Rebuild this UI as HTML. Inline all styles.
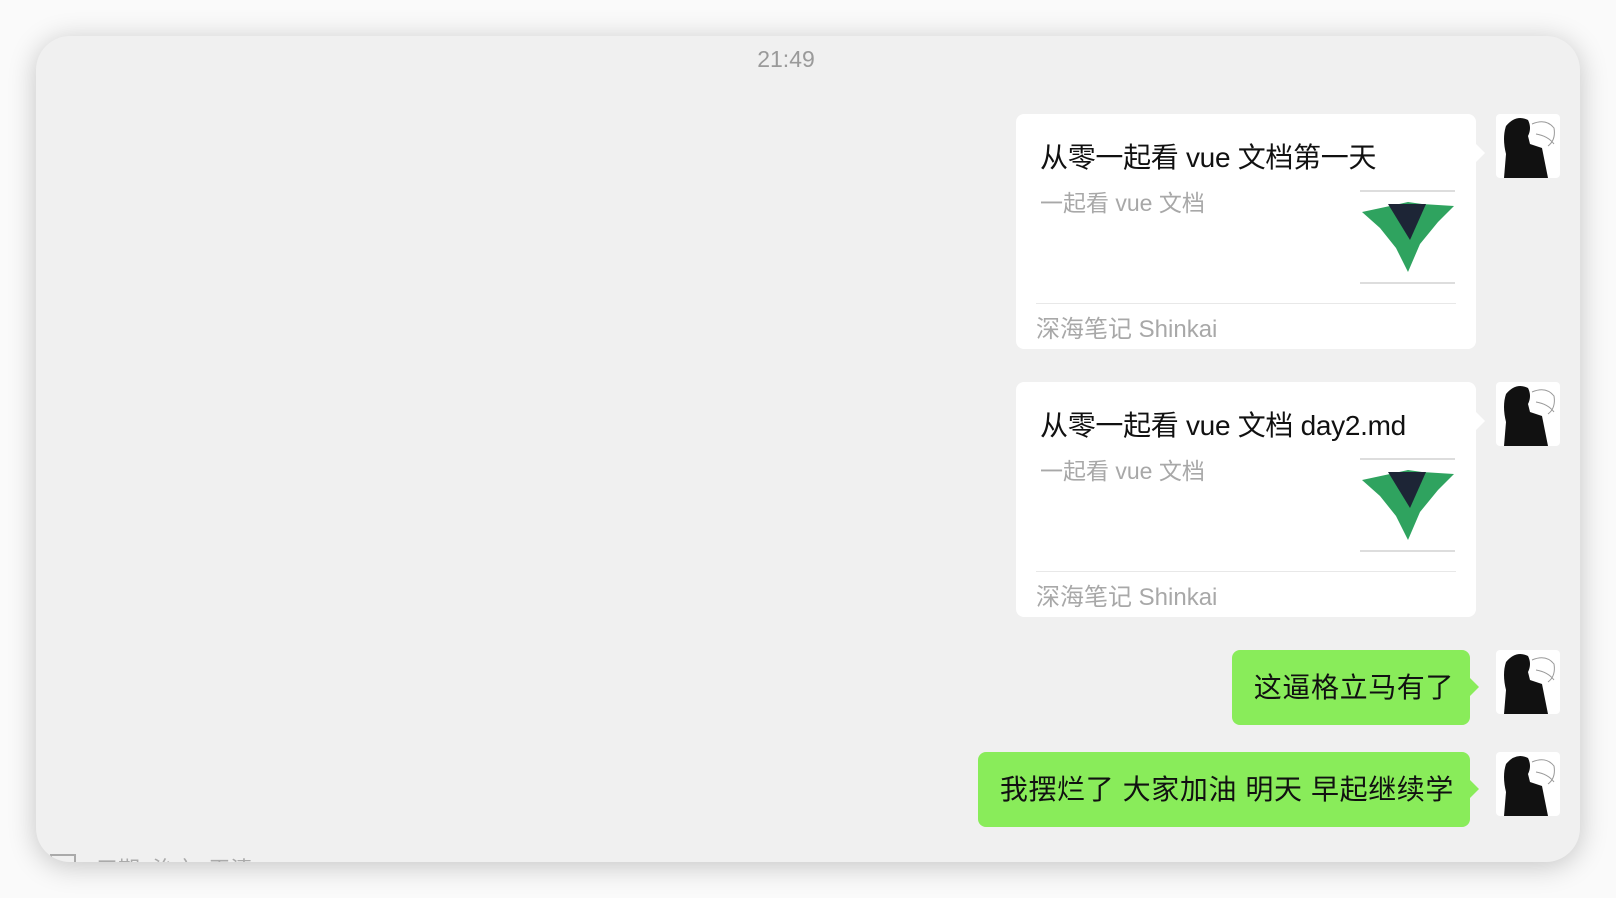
<!DOCTYPE html>
<html><head><meta charset="utf-8"><style>
html,body{margin:0;padding:0;width:1616px;height:898px;overflow:hidden;background:#fafafa;}
body{position:relative;font-family:"Liberation Sans","Noto Sans CJK SC",sans-serif;}
.win{position:absolute;left:36px;top:36px;width:1544px;height:826px;background:#f0f0f0;border-radius:34px;box-shadow:0 4px 28px rgba(0,0,0,0.22);overflow:hidden;}
.abs{position:absolute;}
.time{left:0;width:1500px;text-align:center;top:10px;font-size:23px;color:#9a9a9a;}
.card{background:#fff;border-radius:8px;width:460px;}
.card:after{content:"";position:absolute;right:-9px;top:30px;border:9px solid transparent;border-left-color:#fff;border-right:0;}
.title{left:24px;top:22px;font-size:28px;color:#111;white-space:nowrap;letter-spacing:-0.3px;}
.sub{left:24px;top:70px;font-size:23px;color:#a8a8a8;}
.thumb{left:344px;top:76px;width:95px;height:90px;border-top:2px solid #ddd;border-bottom:2px solid #ddd;}
.line{left:20px;right:20px;top:189px;height:1px;background:#e8e8e8;}
.foot{left:20px;top:195px;font-size:24px;color:#a8a8a8;}
.bub{background:#89ec5a;border-radius:8px;height:75px;font-size:28px;color:#111;line-height:75px;padding:0 16px 0 22px;white-space:nowrap;letter-spacing:0.6px;}
.bub:after{content:"";position:absolute;right:-9px;top:28px;border:9px solid transparent;border-left-color:#89ec5a;border-right:0;}
.av{width:64px;height:64px;border-radius:4px;background:#fff;overflow:hidden;}
</style></head><body>
<div class="win">
<div class="abs time">21:49</div>

<div class="abs card" style="left:980px;top:78px;height:235px;">
 <div class="abs title">从零一起看 vue 文档第一天</div>
 <div class="abs sub">一起看 vue 文档</div>
 <div class="abs thumb"><svg width="95" height="90" viewBox="0 0 95 90"><path d="M2 20 L30 14 L48 10 L62 12 L94 14 L78 30 L60 52 L48 80 L36 56 L20 36 Z" fill="#2fa35f"/><path d="M28 12 L66 12 L50 48 Z" fill="#1d2536"/></svg></div>
 <div class="abs line"></div>
 <div class="abs foot">深海笔记 Shinkai</div>
</div>
<div class="abs av" style="left:1460px;top:78px;"><svg width="64" height="64"><path d="M8 64 L10 40 Q6 24 10 12 Q20 0 32 6 Q36 14 32 22 L34 30 L46 34 L52 64 Z" fill="#111"/><path d="M36 10 Q50 4 58 14 Q60 26 52 32 M40 20 Q52 22 58 30" stroke="#999" fill="none"/></svg></div>

<div class="abs card" style="left:980px;top:346px;height:235px;">
 <div class="abs title">从零一起看 vue 文档 day2.md</div>
 <div class="abs sub">一起看 vue 文档</div>
 <div class="abs thumb"><svg width="95" height="90" viewBox="0 0 95 90"><path d="M2 20 L30 14 L48 10 L62 12 L94 14 L78 30 L60 52 L48 80 L36 56 L20 36 Z" fill="#2fa35f"/><path d="M28 12 L66 12 L50 48 Z" fill="#1d2536"/></svg></div>
 <div class="abs line"></div>
 <div class="abs foot">深海笔记 Shinkai</div>
</div>
<div class="abs av" style="left:1460px;top:346px;"><svg width="64" height="64"><path d="M8 64 L10 40 Q6 24 10 12 Q20 0 32 6 Q36 14 32 22 L34 30 L46 34 L52 64 Z" fill="#111"/><path d="M36 10 Q50 4 58 14 Q60 26 52 32 M40 20 Q52 22 58 30" stroke="#999" fill="none"/></svg></div>

<div class="abs bub" style="right:110px;top:614px;">这逼格立马有了</div>
<div class="abs av" style="left:1460px;top:614px;"><svg width="64" height="64"><path d="M8 64 L10 40 Q6 24 10 12 Q20 0 32 6 Q36 14 32 22 L34 30 L46 34 L52 64 Z" fill="#111"/><path d="M36 10 Q50 4 58 14 Q60 26 52 32 M40 20 Q52 22 58 30" stroke="#999" fill="none"/></svg></div>

<div class="abs bub" style="right:110px;top:716px;">我摆烂了 大家加油 明天 早起继续学</div>
<div class="abs av" style="left:1460px;top:716px;"><svg width="64" height="64"><path d="M8 64 L10 40 Q6 24 10 12 Q20 0 32 6 Q36 14 32 22 L34 30 L46 34 L52 64 Z" fill="#111"/><path d="M36 10 Q50 4 58 14 Q60 26 52 32 M40 20 Q52 22 58 30" stroke="#999" fill="none"/></svg></div>

<div class="abs" style="left:14px;top:818px;width:22px;height:14px;border:2px solid #aaa;"></div>
<div class="abs" style="left:60px;top:816px;font-size:22px;color:#aaa;">三期 &nbsp;治之 &nbsp;天清</div>
</div>
</body></html>
